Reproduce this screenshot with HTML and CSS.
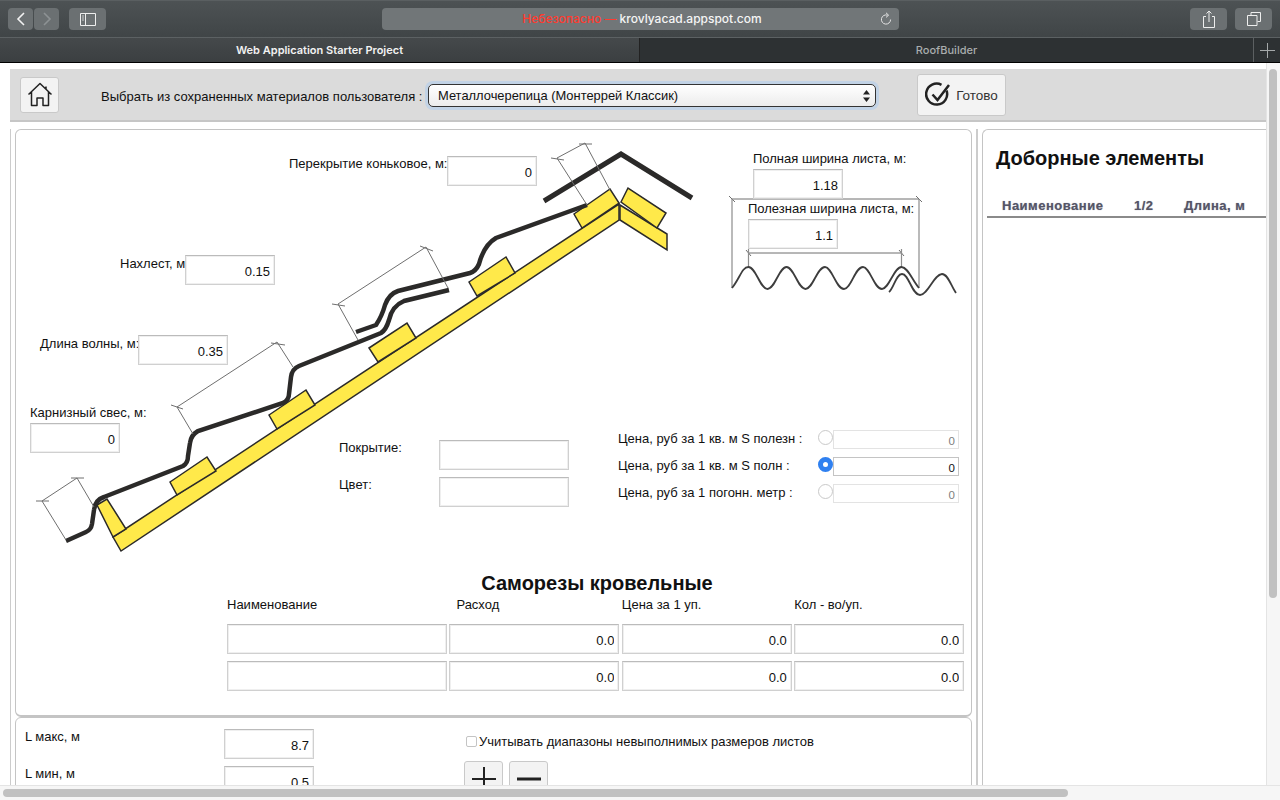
FILE: index.html
```html
<!DOCTYPE html>
<html lang="en">

<head>
  <meta charset="UTF-8" />
  <title>RoofBuilder</title>
  <link rel="stylesheet" href="styles.css">
</head>

<body>
  <div class="toolbar">
    <div class="nav-group">
      <div class="tool-btn nav-btn">
        <svg width="12" height="16" viewBox="0 0 12 16"><path d="M9 2 L3 8 L9 14" fill="none" stroke="#f2f2f2" stroke-width="1.6"/></svg>
      </div>
      <div class="tool-btn nav-btn">
        <svg width="12" height="16" viewBox="0 0 12 16"><path d="M3 2 L9 8 L3 14" fill="none" stroke="#8d9294" stroke-width="1.6"/></svg>
      </div>
    </div>
    <div class="tool-btn wide-btn sidebar-btn">
      <svg width="16" height="13" viewBox="0 0 16 13"><path d="M.5.5h15v12H.5zM5.5.5v12" fill="none" stroke="#eee" stroke-width="1"/><path d="M2 3h2M2 5h2M2 7h2" stroke="#ccc" stroke-width="1"/></svg>
    </div>
    <div class="url-bar">
      <span class="url-text"><span class="url-warning">Небезопасно —</span> krovlyacad.appspot.com</span>
      <svg class="reload" width="12" height="14" viewBox="0 0 12 14"><path d="M7.6 3.2 A4.6 4.6 0 1 0 10.6 7.5" fill="none" stroke="#e4e4e4" stroke-width="1"/><path d="M6 .8 L8.6 3.2 L6 5.4" fill="none" stroke="#e4e4e4" stroke-width="1"/></svg>
    </div>
    <div class="tool-btn wide-btn share-btn">
      <svg width="14" height="18" viewBox="0 0 14 18"><path d="M4 6.5H1.5v11h11v-11H10M7 12V1M4.5 3.5 7 1l2.500 2.500" fill="none" stroke="#eee" stroke-width="1"/></svg>
    </div>
    <div class="tool-btn wide-btn tabs-btn">
      <svg width="14" height="14" viewBox="0 0 14 14"><path d="M4 3.500V.5h9.500v9H10.500M.5 3.500h9.500v10H.5z" fill="none" stroke="#eee" stroke-width="1"/></svg>
    </div>
  </div>

  <div class="tab-bar">
    <div class="tab tab-active">Web Application Starter Project</div>
    <div class="tab">RoofBuilder</div>
    <div class="tab-add">
      <svg width="15" height="15" viewBox="0 0 15 15"><path d="M7.500 0v15M0 7.500h15" stroke="#a5a9aa" stroke-width="1"/></svg>
    </div>
  </div>

  <div class="viewport">
    <div class="page">
      <div class="top-panel">
        <div class="icon-btn home-btn">
          <svg width="26" height="25" viewBox="0 0 26 25"><path d="M1.500 12.500 L13 1.500 L24.500 12.500 M19 4.500 V7.500 M4.500 10 V23.500 H10 V16 H16 V23.500 H21.500 V10" fill="none" stroke="#222" stroke-width="1.500" stroke-linejoin="round"/></svg>
        </div>
        <div class="select-label">Выбрать из сохраненных материалов пользователя :</div>
        <div class="select-box">
          <span>Металлочерепица (Монтеррей Классик)</span>
          <svg width="7" height="12" viewBox="0 0 7 12"><path d="M3.500 0 L7 4.500 H0z M3.500 12 L7 7.500 H0z" fill="#222"/></svg>
        </div>
        <div class="icon-btn done-btn">
          <svg width="26" height="26" viewBox="0 0 26 26"><path d="M21.500 8.500 A10.500 10.500 0 1 1 16.500 2.800" fill="none" stroke="#222" stroke-width="2.500"/><path d="M7.500 12.500 L12.500 18 L24 3" fill="none" stroke="#222" stroke-width="2.500"/></svg>
          <span class="done-text">Готово</span>
        </div>
      </div>

      <div class="workspace">
        <div class="left-col">
          <div class="card main-card">
            <div class="diagram">
              <svg class="roof" width="955" height="440" viewBox="16 130 955 440">
                <g class="wood">
                  <polygon points="113,537 619,204 619,220 121,551"/>
                  <polygon points="97,505 107,499 126,529 113,537"/>
                  <polygon points="170,482 207,457 216,471 177,495"/>
                  <polygon points="269,415 306,390 315,405 277,429"/>
                  <polygon points="369,348 407,323 416,338 378,362"/>
                  <polygon points="469,282 506,257 515,273 477,296"/>
                  <polygon points="574,214 610,189 619,203 582,228"/>
                  <polygon points="620,205 667,234 667,250 620,220"/>
                  <polygon points="621,202 628,188 666,213 657,228"/>
                </g>
                <g class="sheet">
                  <path d="M66 541 L86 532 Q91 530 92 524 L94 510 Q95 500 104 497 L183 466 Q188 463 188 456 L190 443 Q191 435 198 431 L283 403 Q289 400 289 394 L291 377 Q292 369 299 366 L381 333 Q386 330 389 320 Q392 306 404 301 L449 290"/>
                  <path d="M356 332 L376 325 Q382 316 385 305 Q389 294 398 291 L470 273 Q476 271 479 264 Q484 245 496 238 L587 205"/>
                </g>
                <polyline class="ridge" points="544,201 621,154 692,198"/>
                <g class="dim">
                  <path d="M42 501 L77 478 M42 501 L66 540 M77 478 L94 507 M36 501 H49 M71 478 H84"/>
                  <path d="M177 407 L277 342 M177 407 L193 434 M277 342 L293 367 M171 405 L183 409 M271 343 L285 345"/>
                  <path d="M338 304 L426 247 M338 304 L358 340 M426 247 L448 288 M332 304 L345 306 M420 246 L433 251"/>
                  <path d="M557 158 L585 143 M557 158 L587 205 M585 143 L610 190 M551 158 L564 160 M579 144 L592 144"/>
                  <path d="M732 199 H919 M748 253 H902 M729 196 L735 202 M916 196 L922 202 M746 250 L751 256 M899 250 L904 256"/>
                </g>
                <g class="dim-wide">
                  <path d="M732 199 V288 M919 199 V288 M748.500 249 V267 M901.500 249 V267"/>
                </g>
                <g class="wave">
                  <path d="M732 288 C740 278 742 267 748.500 267 C756 267 760 289 767.500 289 C775 289 779 267 786.500 267 C794 267 798 289 805.500 289 C813 289 817 267 825 267 C832 267 836 289 844 289 C851 289 855 267 863 267 C870 267 874 289 882 289 C889 289 894 267 901.500 267 C908 267 912 280 919 288"/>
                  <path d="M889 292 C894 288 896 274 902 274 C909 274 912 295 920 295 C928 295 934 274 942 274 C948 274 951 286 956 293"/>
                </g>
              </svg>

              <label class="field-label lb-ridge">Перекрытие коньковое, м:</label>
              <input class="field in-ridge" type="text" value="0" />
              <label class="field-label lb-lap">Нахлест, м</label>
              <input class="field in-lap" type="text" value="0.15" />
              <label class="field-label lb-wave">Длина волны, м:</label>
              <input class="field in-wave" type="text" value="0.35" />
              <label class="field-label lb-eave">Карнизный свес, м:</label>
              <input class="field in-eave" type="text" value="0" />
              <label class="field-label lb-full">Полная ширина листа, м:</label>
              <input class="field in-full" type="text" value="1.18" />
              <label class="field-label lb-useful">Полезная ширина листа, м:</label>
              <input class="field in-useful" type="text" value="1.1" />
              <label class="field-label lb-cover">Покрытие:</label>
              <input class="field in-cover" type="text" />
              <label class="field-label lb-color">Цвет:</label>
              <input class="field in-color" type="text" />

              <div class="prices">
                <label class="price-label">Цена, руб за 1 кв. м S полезн :</label>
                <input class="radio" type="radio" name="price" />
                <input class="field price-input" type="text" value="0" disabled />
                <label class="price-label">Цена, руб за 1 кв. м S полн :</label>
                <input class="radio" type="radio" name="price" checked />
                <input class="field price-input" type="text" value="0" />
                <label class="price-label">Цена, руб за 1 погонн. метр :</label>
                <input class="radio" type="radio" name="price" />
                <input class="field price-input" type="text" value="0" disabled />
              </div>
            </div>

            <h2 class="screws-title">Саморезы кровельные</h2>
            <div class="screws">
              <div class="screws-head">Наименование</div>
              <div class="screws-head">Расход</div>
              <div class="screws-head">Цена за 1 уп.</div>
              <div class="screws-head">Кол - во/уп.</div>
              <input class="field" type="text" />
              <input class="field" type="text" value="0.0" />
              <input class="field" type="text" value="0.0" />
              <input class="field" type="text" value="0.0" />
              <input class="field" type="text" />
              <input class="field" type="text" value="0.0" />
              <input class="field" type="text" value="0.0" />
              <input class="field" type="text" value="0.0" />
            </div>
          </div>

          <div class="card limits-card">
            <div class="limits">
              <label>L макс, м</label>
              <input class="field" type="text" value="8.7" />
              <label>L мин, м</label>
              <input class="field" type="text" value="0.5" />
            </div>
            <div class="ranges">
              <label class="range-check"><input type="checkbox" />Учитывать диапазоны невыполнимых размеров листов</label>
              <div class="range-btns">
                <div class="icon-btn square-btn">
                  <svg width="26" height="26" viewBox="0 0 26 26"><path d="M13 1v24M1 13h24" stroke="#222" stroke-width="2"/></svg>
                </div>
                <div class="icon-btn square-btn">
                  <svg width="26" height="26" viewBox="0 0 26 26"><path d="M1 13h24" stroke="#222" stroke-width="3"/></svg>
                </div>
              </div>
            </div>
          </div>
        </div>

        <div class="divider"></div>

        <div class="card extras-card">
          <h2 class="extras-title">Доборные элементы</h2>
          <div class="extras-head">
            <span>Наименование</span>
            <span>1/2</span>
            <span>Длина, м</span>
          </div>
        </div>
      </div>
    </div>

    <div class="vbar"><div class="vbar-thumb"></div></div>
    <div class="hbar"><div class="hbar-thumb"></div></div>
  </div>
</body>
</html>
```

FILE: styles.css
```css
* {
  box-sizing: border-box;
  margin: 0;
  padding: 0;
}

html,
body {
  width: 1280px;
  height: 800px;
  overflow: hidden;
}

body {
  background-color: #fff;
  color: #111;
  font-family: "Liberation Sans", Arial, sans-serif;
  font-size: 13px;
  display: flex;
  flex-direction: column;
}

/* Browser chrome */
.toolbar {
  height: 38px;
  flex: none;
  display: flex;
  align-items: flex-start;
  padding: 8px 8px 0;
  background: linear-gradient(#4d5254, #404547);
  border-bottom: 1px solid #5c6163;
  border-top: 1px solid #5a5f61;
}

.nav-group {
  display: flex;
  gap: 1px;
}

.tool-btn {
  height: 22px;
  margin-top: -1px;
  background-color: #6b7072;
  border-radius: 4px;
  display: flex;
  align-items: center;
  justify-content: center;
}

.nav-btn {
  width: 25px;
}

.wide-btn {
  width: 37px;
}

.sidebar-btn {
  margin-left: 10px;
}

.url-bar {
  width: 517px;
  height: 22px;
  margin: -1px 0 0 276px;
  padding-left: 3px;
  background-color: #717678;
  border-radius: 4px;
  position: relative;
  text-align: center;
  font-family: Inter, sans-serif;
  font-size: 12px;
  line-height: 22px;
  color: #f5f5f5;
}

.url-text {
  font-weight: 500;
}

.url-warning {
  color: #ff3b30;
}

.reload {
  position: absolute;
  right: 7px;
  top: 4px;
}

.share-btn {
  margin-left: 291px;
}

.tabs-btn {
  margin-left: 8px;
}

.tab-bar {
  height: 25px;
  flex: none;
  display: flex;
  border-bottom: 1px solid #000;
  background-color: #2d3133;
  font-family: Inter, sans-serif;
  font-size: 11px;
  font-weight: 500;
  line-height: 25px;
  color: #a9adae;
}

.tab {
  flex: 1;
  text-align: center;
}

.tab-active {
  width: 640px;
  flex: none;
  background: linear-gradient(#45494b, #3b3f41);
  border-right: 1px solid #222;
  color: #f2f2f2;
  font-weight: 600;
}

.tab-add {
  width: 27px;
  flex: none;
  border-left: 1px solid #5c6062;
  display: flex;
  align-items: center;
  justify-content: center;
}

/* Page area with its scrollbars */
.viewport {
  flex: 1;
  min-height: 0;
  display: grid;
  grid-template-columns: 1fr 14px;
  grid-template-rows: 1fr 15px;
}

.page {
  overflow: hidden;
  padding-top: 6px;
  min-width: 0;
  min-height: 0;
}

.vbar {
  background-color: #f6f6f6;
  border-left: 1px solid #e4e4e4;
  padding: 6px 3px 0 2px;
}

.vbar-thumb {
  height: 529px;
  background-color: #c1c1c1;
  border-radius: 4px;
}

.hbar {
  grid-column: 1 / 3;
  background-color: #f6f6f6;
  border-top: 1px solid #e4e4e4;
  padding: 3px 0 0 3px;
}

.hbar-thumb {
  width: 1065px;
  height: 8px;
  background-color: #c1c1c1;
  border-radius: 4px;
}

/* Top panel */
.top-panel {
  height: 53px;
  margin-left: 10px;
  display: flex;
  align-items: center;
  background-color: #dbdbdb;
  border-bottom: 2px solid #c6c6c6;
}

.icon-btn {
  background-color: #f3f3f3;
  border: 1px solid #c9c9c9;
  border-radius: 3px;
  display: flex;
  align-items: center;
  justify-content: center;
}

.home-btn {
  width: 39px;
  height: 36px;
  margin-left: 10px;
}

.select-label {
  margin-left: 42px;
  width: 327px;
  padding-top: 4px;
}

.select-box {
  width: 448px;
  height: 23px;
  margin-top: 2px;
  padding: 0 5px 0 9px;
  display: flex;
  align-items: center;
  justify-content: space-between;
  background: linear-gradient(#fff, #ececec);
  border: 1px solid #333;
  border-radius: 5px;
  box-shadow: 0 0 0 3px #c2d3e6;
  font-size: 12.900px;
}

.done-btn {
  width: 89px;
  height: 42px;
  margin-left: 41px;
  gap: 5px;
  color: #333;
  font-size: 13.500px;
}

.done-text {
  padding-top: 1px;
}

/* Workspace */
.workspace {
  display: flex;
  margin: 7px 0 0 10px;
}

.left-col {
  width: 962px;
  flex: none;
  padding-left: 4px;
  border-left: 1px solid #ccc;
}

.divider {
  width: 2px;
  flex: none;
  margin: 0 4px;
  background-color: #ccc;
}

.card {
  background-color: #fff;
  border: 1px solid #c4c4c4;
  border-radius: 6px;
}

.main-card {
  height: 588px;
  border-bottom-width: 2px;
}

.diagram {
  height: 440px;
  position: relative;
}

.roof {
  position: absolute;
  left: 0;
  top: 0;
}

.wood polygon {
  fill: #ffe94a;
  stroke: #2b2a29;
  stroke-width: 1.500;
}

.sheet path {
  fill: none;
  stroke: #2b2a29;
  stroke-width: 4.500;
}

.ridge {
  fill: none;
  stroke: #2b2a29;
  stroke-width: 5;
}

.dim path {
  fill: none;
  stroke: #6f6f6f;
  stroke-width: 1;
}

.dim-wide path {
  fill: none;
  stroke: #8d8d8d;
  stroke-width: 1.200;
}

.wave path {
  fill: none;
  stroke: #3d3d3d;
  stroke-width: 1.800;
}

/* Inputs and labels */
.field {
  width: 100%;
  height: 30px;
  padding: 2px 4px 0;
  background-color: #fff;
  border: 1px solid #d0d0d0;
  border-top-color: #bbb;
  box-shadow: inset 0 0 0 1px #efefef;
  color: #111;
  font-family: "Liberation Sans", Arial, sans-serif;
  font-size: 13px;
  text-align: right;
  outline: none;
}

.diagram .field {
  position: absolute;
  width: 90px;
}

.field-label {
  position: absolute;
  white-space: nowrap;
}

.lb-ridge { left: 273px; top: 26px; }
.in-ridge { left: 431px; top: 26px; }
.lb-lap { left: 104px; top: 126px; }
.in-lap { left: 169px; top: 125px; }
.lb-wave { left: 24px; top: 206px; }
.in-wave { left: 122px; top: 205px; }
.lb-eave { left: 14px; top: 275px; }
.in-eave { left: 14px; top: 293px; }
.lb-full { left: 737px; top: 21px; }
.in-full { left: 737px; top: 39px; }
.lb-useful { left: 732px; top: 71px; }
.in-useful { left: 732px; top: 89px; }
.lb-cover { left: 323px; top: 310px; }
.diagram .in-cover { left: 423px; top: 310px; width: 130px; }
.lb-color { left: 323px; top: 347px; }
.diagram .in-color { left: 423px; top: 347px; width: 130px; }

.prices {
  position: absolute;
  left: 602px;
  top: 300px;
  width: 341px;
  display: grid;
  grid-template-columns: 200px 15px 126px;
  grid-auto-rows: 19px;
  row-gap: 8px;
  align-items: center;
}

.price-label {
  margin-top: -3px;
}

.diagram .price-input {
  position: static;
  width: 126px;
  height: 19px;
  padding: 2px 3px 0;
  font-size: 11.500px;
  box-shadow: none;
  border-color: #c4c4c4;
}

.diagram .price-input:disabled {
  border-color: #e3e3e3;
  color: #808080;
}

.radio {
  appearance: none;
  width: 15px;
  height: 15px;
  margin-top: -4px;
  background-color: #fff;
  border: 1.500px solid #c9c9c9;
  border-radius: 50%;
}

.radio:checked {
  border: 5px solid #2f80f0;
}

.screws-title {
  font-size: 20px;
  line-height: 26px;
  text-align: center;
  margin-left: 1px;
  padding-left: 207px;
  padding-right: 0;
  width: 953px;
}

.screws {
  margin: 2px 0 0 211px;
  width: 737px;
  display: grid;
  grid-template-columns: 220px 170px 170px 170px;
  grid-template-rows: 19px 30px 30px;
  gap: 7px 2.400px;
}

.screws-head {
  line-height: 13px;
}

.screws-head:nth-child(2) {
  padding-left: 7px;
}

.limits-card {
  height: 90px;
  display: flex;
}

.limits {
  width: 299px;
  padding: 11px 0 0 9px;
  display: grid;
  grid-template-columns: 199px 90px;
  grid-auto-rows: 30px;
  row-gap: 7px;
}

.ranges {
  margin-left: 149px;
  padding-top: 14px;
}

.range-check {
  display: flex;
  align-items: center;
  height: 18px;
  padding-left: 2px;
}

.range-check input {
  appearance: none;
  width: 11px;
  height: 11px;
  margin-right: 2px;
  background-color: #fff;
  border: 1px solid #c4c4c4;
  border-radius: 2px;
}

.range-btns {
  display: flex;
  gap: 6px;
  margin-top: 11px;
}

.square-btn {
  width: 39px;
  height: 36px;
}

.extras-card {
  flex: 1;
  height: 700px;
  padding-left: 4px;
  border-right: none;
  border-bottom: none;
  border-radius: 6px 0 0 0;
}

.extras-title {
  font-size: 20px;
  line-height: 24px;
  margin: 16px 0 0 9px;
}

.extras-head {
  margin-top: 24px;
  padding-left: 15px;
  height: 24px;
  display: grid;
  grid-template-columns: 132px 50px 1fr;
  align-items: center;
  border-bottom: 2px solid #8a8a8a;
  font-weight: bold;
  font-size: 13px;
  letter-spacing: 0.500px;
  color: #555566;
  text-shadow: 0 0 1px #9a9ab0;
}
```
